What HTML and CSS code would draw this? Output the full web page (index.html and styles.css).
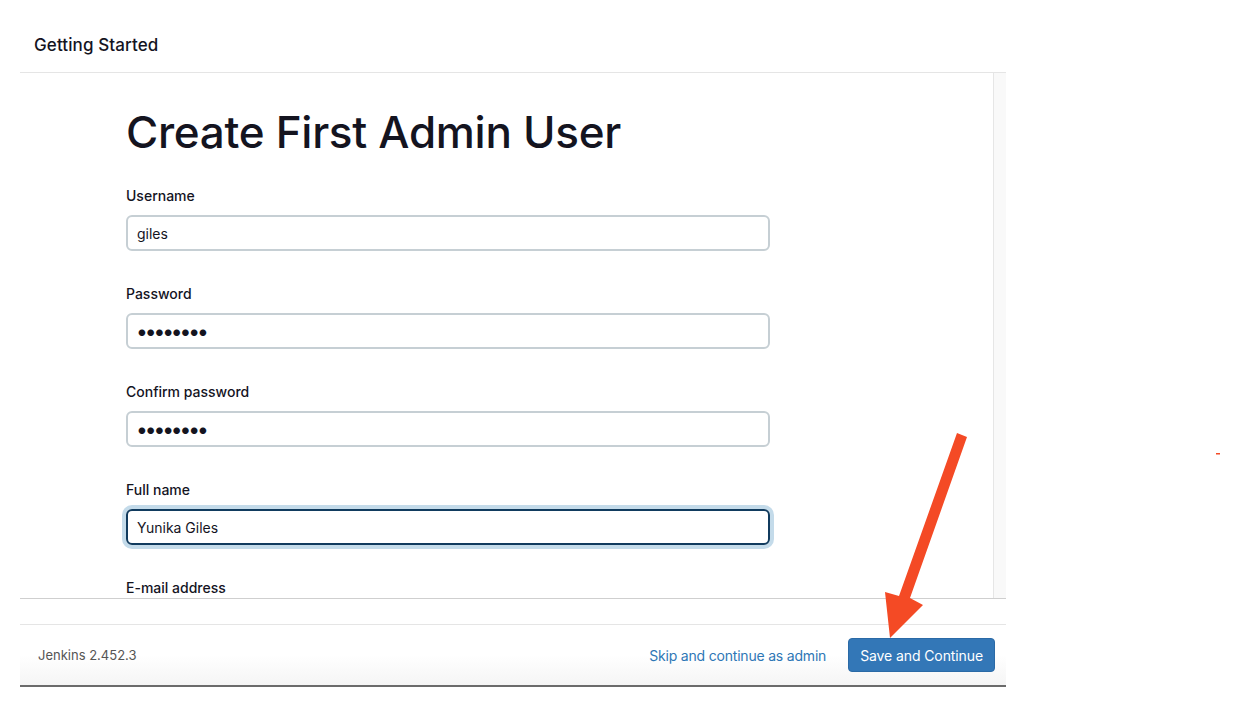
FILE: index.html
```html
<!DOCTYPE html>
<html lang="en">
<head>
<meta charset="utf-8">
<title>Getting Started</title>
<link rel="stylesheet" href="styles.css">
</head>
<body>
<div class="page">
  <div class="dialog">
    <div class="dialog-header">Getting Started</div>
    <div class="dialog-body">
      <div class="content">
        <h1 class="title">Create First Admin User</h1>
        <div class="field">
          <label class="label">Username</label>
          <div class="input">giles</div>
        </div>
        <div class="field">
          <label class="label">Password</label>
          <div class="input dots">••••••••</div>
        </div>
        <div class="field">
          <label class="label">Confirm password</label>
          <div class="input dots">••••••••</div>
        </div>
        <div class="field">
          <label class="label">Full name</label>
          <div class="input focused">Yunika Giles</div>
        </div>
        <div class="field">
          <label class="label">E-mail address</label>
          <div class="input"></div>
        </div>
      </div>
      <div class="scrolltrack"></div>
    </div>
    <div class="dialog-spacer"></div>
    <div class="dialog-footer">
      <span class="version">Jenkins 2.452.3</span>
      <div class="actions">
        <a class="skip" href="#">Skip and continue as admin</a>
        <button class="save">Save and Continue</button>
      </div>
    </div>
  </div>
</div>
<svg class="arrow" width="1239" height="707" viewBox="0 0 1239 707">
  <polygon fill="#f44a25" points="957,433 967,437 910,598 923,605 890,638 885,592 899,596"/>
  <rect x="1216" y="453" width="4" height="1.5" fill="#f44a25"/>
</svg>
</body>
</html>
```
FILE: styles.css
```css
html, body {
  margin: 0;
  padding: 0;
  background: #ffffff;
  font-family: Inter, "Noto Sans", "Liberation Sans", sans-serif;
  color: #14141f;
}
.page {
  padding-left: 20px;
  width: 986px;
}
.dialog {
  width: 986px;
}
.dialog-header {
  height: 73px;
  border-bottom: 1px solid #e5e5e5;
  box-sizing: border-box;
  padding-left: 14px;
  padding-top: 35px;
  font-size: 17px;
  line-height: 20px;
  font-weight: 500;
  letter-spacing: 0.1px;
  color: #14141f;
}
.dialog-body {
  height: 525px;
  display: flex;
  border-bottom: 1px solid #cfcfcf;
  overflow: hidden;
}
.content {
  flex: 1;
  padding-left: 106px;
  padding-top: 30px;
}
.scrolltrack {
  width: 12px;
  background: #f9f9f9;
  border-left: 1px solid #e6e6e6;
}
.title {
  margin: 0 0 26px 0;
  font-size: 44px;
  font-weight: 500;
  line-height: 58px;
  letter-spacing: -0.3px;
  color: #14141f;
}
.field {
  margin-bottom: 34px;
  width: 644px;
}
.label {
  display: block;
  font-size: 14px;
  font-weight: 500;
  line-height: 18px;
  margin-bottom: 10px;
  color: #14141f;
}
.input {
  height: 36px;
  box-sizing: border-box;
  border: 2px solid #c6cfd4;
  border-radius: 6px;
  padding: 0 9px;
  display: flex;
  align-items: center;
  font-size: 14px;
  color: #14141f;
}
.input.dots {
  font-size: 21px;
  letter-spacing: -3.1px;
  padding-left: 8px;
}
.input.focused {
  border-color: #113b5e;
  box-shadow: 0 0 0 4px #c4dbea;
}
.dialog-spacer {
  height: 25px;
  border-bottom: 1px solid #e5e5e5;
}
.dialog-footer {
  height: 62px;
  box-sizing: border-box;
  border-bottom: 2px solid #6b6b6b;
  background: linear-gradient(#ffffff 50%, #f5f5f5);
  display: flex;
  align-items: center;
  justify-content: space-between;
  padding-left: 18px;
  padding-right: 11px;
}
.version {
  font-size: 13px;
  color: #555;
}
.actions {
  display: flex;
  align-items: center;
  gap: 22px;
}
.skip {
  color: #2e77b6;
  text-decoration: none;
  font-size: 14px;
  letter-spacing: -0.2px;
}
.save {
  background: #3377b7;
  color: #fff;
  border: 1px solid #2b6aa6;
  border-radius: 4px;
  height: 34px;
  padding: 0 11px;
  font-family: inherit;
  font-size: 14px;
  font-weight: 400;
  letter-spacing: -0.1px;
}
.arrow {
  position: absolute;
  left: 0;
  top: 0;
  pointer-events: none;
}
```
